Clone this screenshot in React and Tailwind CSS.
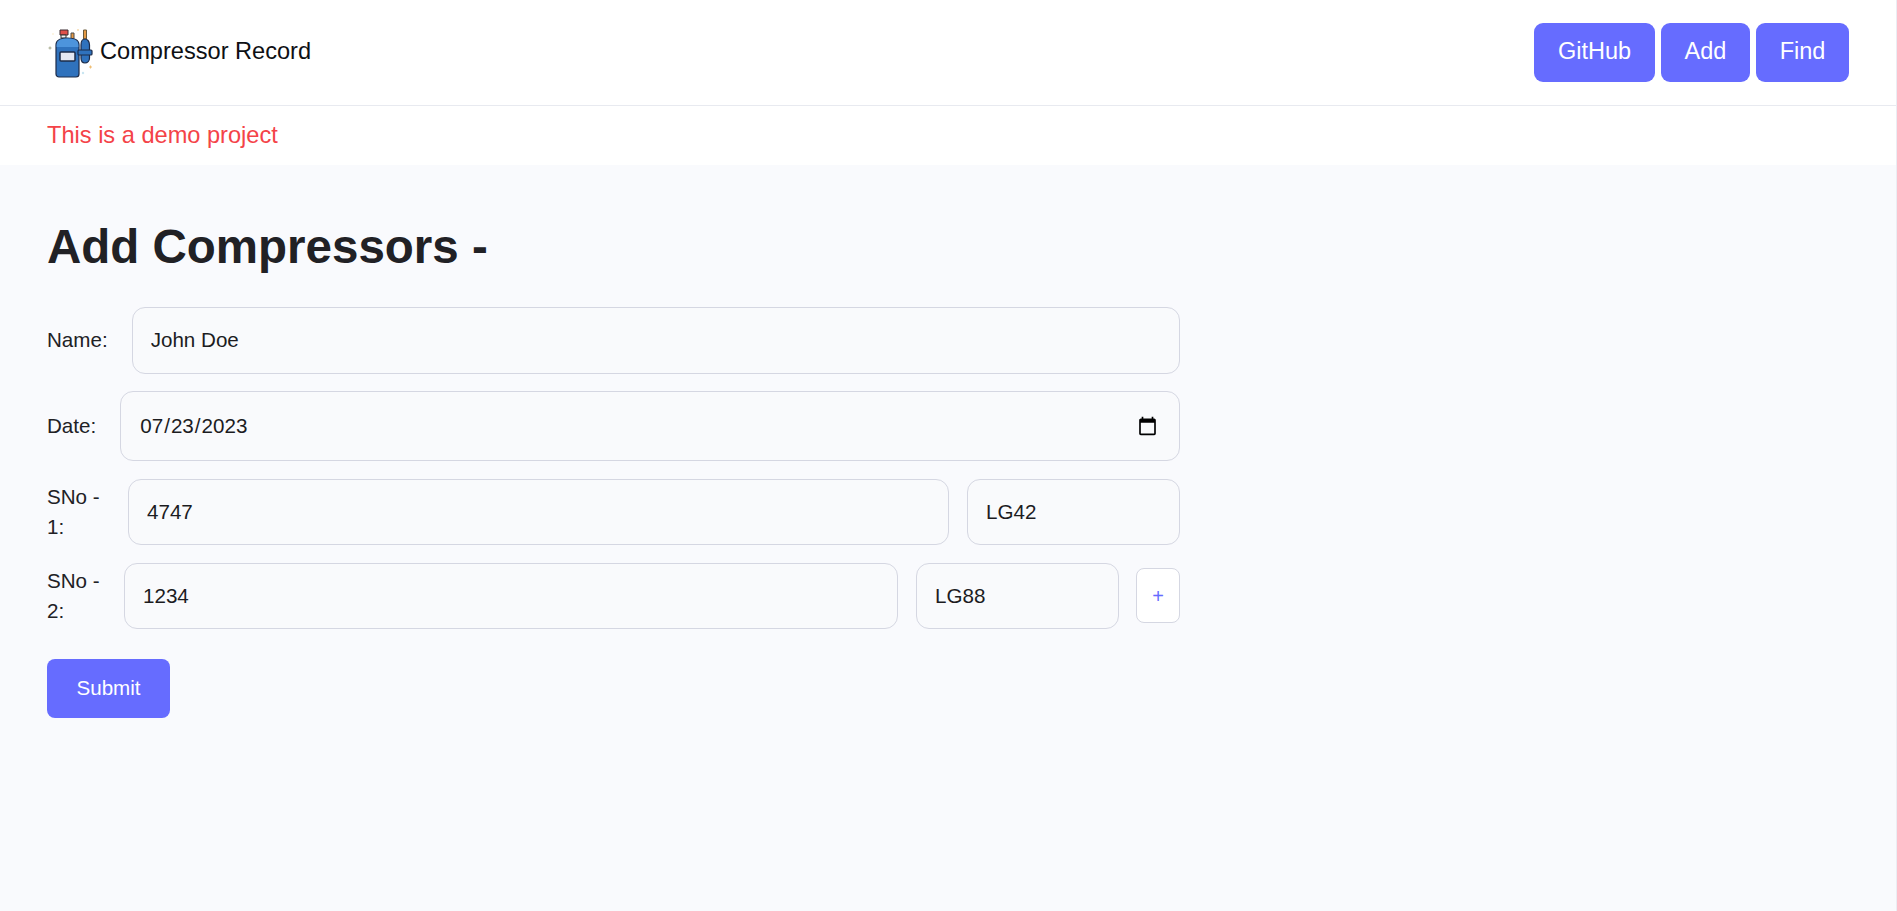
export default function App() {
  const input = "h-[66.500px] min-w-0 rounded-[13px] border border-[#d5d7e2] bg-[#f9fafc] px-[18px] text-[20.600px] text-[#1c1c1f] outline-none";
  const label = "mr-6 shrink-0 text-[20.600px] leading-[30px] text-[#212125]";
  const navButton = "h-[59px] rounded-[9px] bg-[#666cff] pb-[2px] text-[23.500px] text-white";
  return (
    <div className="min-h-[911px] border-r border-[#ebedf3] bg-[#f9fafd] font-['Liberation_Sans',Arial,sans-serif]">
      <header className="flex h-[106px] items-center justify-between border-b border-[#e8eaf0] bg-white pl-[48px] pr-[47px]">
        <div className="flex items-center gap-[6px]">
          <svg width="46" height="52" viewBox="0 0 46 52">
            <path d="M12 3h8v5h-8z" fill="#e0504a" stroke="#3a2b30" strokeWidth="1" />
            <path d="M13 8h5v3h-5z" fill="#f3f3f3" stroke="#333" strokeWidth="1" />
            <path d="M23 6h3v6h-3z" fill="#e59a45" stroke="#4a4a4a" strokeWidth="1" />
            <path d="M11 50a3 3 0 0 1-3-3V18c0-5 5-7 11.500-7S31 13 31 18v29a3 3 0 0 1-3 3z" fill="#2f72bd" stroke="#1d2c4a" strokeWidth="1.200" />
            <path d="M8.600 20v-2c0-5 4.900-6.400 10.900-6.400S30.400 13 30.400 18v2z" fill="#4d94dc" />
            <rect x="12" y="25" width="15" height="9" rx="1" fill="#e4e8f2" stroke="#1d2c4a" strokeWidth="1.500" />
            <path d="M35.500 3h3v9h-3z" fill="#e59a45" stroke="#6b5a3a" strokeWidth="1" />
            <path d="M33 18c0-4 2-6 4-6s4.500 2 4.500 6v13c0 3-2 5-4.500 5s-4-2-4-5z" fill="#2f72bd" stroke="#1d2c4a" strokeWidth="1.200" />
            <rect x="30" y="23" width="14" height="5" rx="1" fill="#2f72bd" stroke="#1d2c4a" strokeWidth="1.200" />
            <path d="M0.500 21h3M2 19.500v3" stroke="#a5a98a" strokeWidth="1" />
            <path d="M41 40h3M42.500 38.500v3" stroke="#f0bf75" strokeWidth="1" />
            <circle cx="35" cy="46" r="1.200" fill="#c9e6f2" />
            <circle cx="30" cy="3" r="0.800" fill="#f0bf75" />
            <circle cx="5" cy="7" r="0.700" fill="#f5e3b5" />
          </svg>
          <span className="mb-[2px] text-[23.600px] text-[#0e1014]">Compressor Record</span>
        </div>
        <nav className="flex gap-[6px]">
          <button className={`${navButton} w-[121px]`}>GitHub</button>
          <button className={`${navButton} w-[89px]`}>Add</button>
          <button className={`${navButton} w-[93px]`}>Find</button>
        </nav>
      </header>
      <div className="flex h-[59px] items-center bg-white pl-[47px] text-[23.600px] text-[#f44348]">This is a demo project</div>
      <main className="w-[1180px] pl-[47px] pt-[52px]">
        <h1 className="mb-[30px] text-[47.500px] font-bold leading-[60px] text-[#212125]">Add Compressors -</h1>
        <div className="flex flex-col gap-[17.500px]">
          <div className="flex items-center">
            <label className={label}>Name:</label>
            <input className={`${input} flex-1`} defaultValue="John Doe" />
          </div>
          <div className="flex items-center">
            <label className={label}>Date:</label>
            <input type="date" className={`${input} h-[70px] flex-1 pl-[18px] pr-[19px]`} defaultValue="2023-07-23" />
          </div>
          <div className="flex items-center">
            <label className={`${label} w-[57px]`}>SNo - 1:</label>
            <input className={`${input} flex-1`} defaultValue="4747" />
            <input className={`${input} ml-[18px] w-[213px]`} defaultValue="LG42" />
          </div>
          <div className="flex items-center">
            <label className={`${label} w-[53px]`}>SNo - 2:</label>
            <input className={`${input} flex-1`} defaultValue="1234" />
            <input className={`${input} ml-[18px] w-[203px]`} defaultValue="LG88" />
            <button className="ml-[17px] h-[55px] w-[44px] rounded-lg border border-[#d5d7e2] bg-white text-[20px] text-[#666cff]">+</button>
          </div>
        </div>
        <button className="mt-[30px] h-[59px] w-[123px] rounded-lg bg-[#666cff] text-[20.600px] text-white">Submit</button>
      </main>
    </div>
  );
}
